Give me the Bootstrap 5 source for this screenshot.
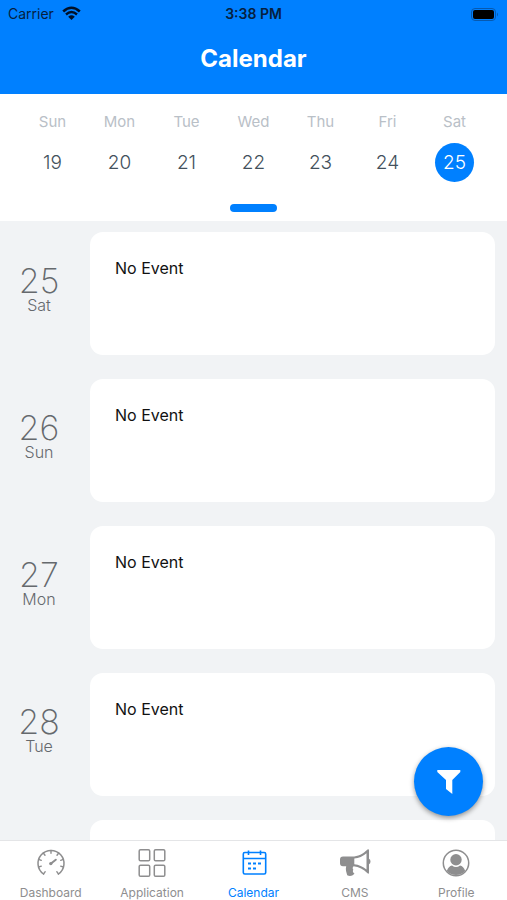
<!DOCTYPE html>
<html lang="en">
<head>
<meta charset="utf-8">
<meta name="viewport" content="width=device-width, initial-scale=1">
<title>Calendar</title>
<link href="https://cdn.jsdelivr.net/npm/bootstrap@5.3.0/dist/css/bootstrap.min.css" rel="stylesheet">
<style>
  :root { --brand: #0080ff; --muted: #8e8e8f; }
  body { font-family: Inter, "Liberation Sans", sans-serif; background: #f1f3f5; color: #111; }
  .app-header { background: var(--brand); height: 94px; }
  .status-bar { height: 27px; padding: 0 8px; font-size: 14px; color: #06203f; }
  .status-time { font-weight: 600; }
  .app-title { font-size: 24px; line-height: 28px; font-weight: 700; margin-top: 18px; }
  .week-panel { padding: 17px 19px 9px; height: 127px; }
  .weekday { font-size: 15px; line-height: 22px; color: #b9c0c7; }
  .day-btn { width: 39px; height: 39px; margin-top: 10px; font-size: 19px; line-height: 39px; color: #43515c; font-weight: 300; }
  .day-btn.active { background: var(--brand); color: #fff; }
  .knob { width: 47px; height: 8px; background: var(--brand); }
  .agenda { padding: 11px 12px 0 0; }
  .agenda-row { margin-bottom: 24px; }
  .agenda-date { width: 78px; margin-right: 12px; padding-top: 35px; color: #65696d; font-weight: 300; }
  .agenda-num { font-size: 34px; line-height: 28px; font-weight: 200; }
  .agenda-day { font-size: 16px; line-height: 20px; }
  .event-card { height: 123px; border-radius: 13px; padding: 24px 25px; font-size: 16px; line-height: 24px; }
  .fab { width: 69px; height: 69px; right: 24px; bottom: 24px; background: var(--brand); box-shadow: 0 2px 5px rgba(0,0,0,.4); }
  .tab-bar { height: 60px; border-top: 1px solid #e4e5e7; }
  .tab-link { color: var(--muted); font-size: 12px; line-height: 16px; padding-top: 6px; gap: 6px; }
  .tab-link.active { color: var(--brand); }
</style>
<script src="https://cdn.jsdelivr.net/npm/bootstrap@5.3.0/dist/js/bootstrap.bundle.min.js" defer></script>
</head>
<body class="vh-100 d-flex flex-column overflow-hidden">
<header class="app-header flex-shrink-0">
  <div class="status-bar row g-0 align-items-center">
    <div class="col d-flex align-items-center gap-2"><span>Carrier</span>
      <svg width="19" height="15" viewBox="0 0 19 15" fill="none" stroke="#001027" aria-hidden="true"><path d="M1.2 5.5Q9.500-2 17.800 5.500" stroke-width="2.600"/><path d="M4 8.500Q9.500 3.500 15 8.500" stroke-width="2.400"/><path d="M6.200 10.700Q9.500 7.900 12.800 10.700L9.500 14Z" fill="#001027" stroke="none"/></svg>
    </div>
    <div class="col-auto status-time">3:38 PM</div>
    <div class="col text-end lh-1">
      <svg width="29" height="13" viewBox="0 0 29 13" aria-hidden="true"><rect x="1.500" y=".5" width="24" height="12" rx="3.500" fill="none" stroke="#0759af"/><rect x="3" y="2" width="21" height="9" rx="2" fill="#000"/><path d="M27 4.500q2 2 0 4z" fill="#0759af"/></svg>
    </div>
  </div>
  <h1 class="app-title text-white text-center mb-0">Calendar</h1>
</header>

<section class="week-panel bg-white flex-shrink-0 d-flex flex-column justify-content-between align-items-center" aria-label="Week">
  <div class="row g-0 w-100 text-center">
    <div class="col"><div class="weekday">Sun</div><button type="button" class="day-btn btn rounded-circle border-0 p-0">19</button></div>
    <div class="col"><div class="weekday">Mon</div><button type="button" class="day-btn btn rounded-circle border-0 p-0">20</button></div>
    <div class="col"><div class="weekday">Tue</div><button type="button" class="day-btn btn rounded-circle border-0 p-0">21</button></div>
    <div class="col"><div class="weekday">Wed</div><button type="button" class="day-btn btn rounded-circle border-0 p-0">22</button></div>
    <div class="col"><div class="weekday">Thu</div><button type="button" class="day-btn btn rounded-circle border-0 p-0">23</button></div>
    <div class="col"><div class="weekday">Fri</div><button type="button" class="day-btn btn rounded-circle border-0 p-0">24</button></div>
    <div class="col"><div class="weekday">Sat</div><button type="button" class="day-btn btn rounded-circle border-0 p-0 active">25</button></div>
  </div>
  <button type="button" class="knob btn border-0 p-0 rounded-pill" aria-label="Expand calendar"></button>
</section>

<div class="position-relative flex-grow-1 overflow-hidden d-flex flex-column">
  <main class="agenda flex-grow-1 overflow-hidden">
    <article class="agenda-row d-flex"><div class="agenda-date text-center"><div class="agenda-num">25</div><div class="agenda-day">Sat</div></div><div class="event-card bg-white flex-grow-1">No Event</div></article>
    <article class="agenda-row d-flex"><div class="agenda-date text-center"><div class="agenda-num">26</div><div class="agenda-day">Sun</div></div><div class="event-card bg-white flex-grow-1">No Event</div></article>
    <article class="agenda-row d-flex"><div class="agenda-date text-center"><div class="agenda-num">27</div><div class="agenda-day">Mon</div></div><div class="event-card bg-white flex-grow-1">No Event</div></article>
    <article class="agenda-row d-flex"><div class="agenda-date text-center"><div class="agenda-num">28</div><div class="agenda-day">Tue</div></div><div class="event-card bg-white flex-grow-1">No Event</div></article>
    <article class="agenda-row d-flex"><div class="agenda-date"></div><div class="event-card bg-white flex-grow-1"></div></article>
  </main>
  <button type="button" class="fab btn border-0 rounded-circle p-0 position-absolute d-flex align-items-center justify-content-center" aria-label="Filter">
    <svg width="24" height="24" viewBox="0 0 24 24" fill="#fff" aria-hidden="true"><path d="M.3 0H23.300V2L15.300 10V24L9 19V10L.3 2Z"/></svg>
  </button>
</div>

<nav class="tab-bar bg-white flex-shrink-0 row g-0" aria-label="Main">
  <a href="#" class="col tab-link text-decoration-none d-flex flex-column align-items-center">
    <svg width="30" height="32" viewBox="0 0 30 32" fill="none" stroke="currentColor" stroke-linecap="round" aria-hidden="true"><path d="M7.500 27A13 13 0 1 1 22.500 27" stroke-width="1.500"/><path d="M7.500 27l1.700-2.300M22.500 27l-1.700-2.300M2.600 20l2.700-.8M27.400 20l-2.700-.8M2.600 12.300l2.700 1M27.400 12.300l-2.700 1M7.300 6l1.700 2.200M22.700 6l-1.700 2.200M15 3.500v2.800" stroke-width="1.400"/><path d="M15 16.500l4.800-3.800" stroke-width="2"/><circle cx="14.800" cy="16.600" r="1.700" fill="currentColor" stroke="none"/></svg>
    <span>Dashboard</span></a>
  <a href="#" class="col tab-link text-decoration-none d-flex flex-column align-items-center">
    <svg width="30" height="32" viewBox="0 0 30 32" fill="none" stroke="currentColor" stroke-width="1.500" aria-hidden="true"><rect x="2.200" y="2.800" width="10.500" height="11" rx="1.300"/><rect x="17.300" y="2.800" width="10.500" height="11" rx="1.300"/><rect x="2.200" y="18.200" width="10.500" height="11" rx="1.300"/><rect x="17.300" y="18.200" width="10.500" height="11" rx="1.300"/></svg>
    <span>Application</span></a>
  <a href="#" class="col tab-link active text-decoration-none d-flex flex-column align-items-center" aria-current="page">
    <svg width="30" height="32" viewBox="0 0 30 32" fill="none" stroke="currentColor" stroke-width="1.600" aria-hidden="true"><rect x="4.300" y="5.500" width="22.400" height="21.500" rx="1.500"/><path d="M4.300 11.500H26.700M9.500 3.500v4.500M21.500 3.500v4.500" /><path d="M9 16.500h3M14 16.500h3M19 16.500h3M9 21.500h3M14 21.500h3" stroke-width="1.900"/></svg>
    <span>Calendar</span></a>
  <a href="#" class="col tab-link text-decoration-none d-flex flex-column align-items-center">
    <svg width="32" height="32" viewBox="0 0 32 32" fill="currentColor" aria-hidden="true"><path fill-rule="evenodd" d="M4 9.500H13C19 9.500 24 7 28.500 2.500Q30 1.800 30 3.500V11.800Q31.500 12.500 31.500 14.500T30 17.300V25.500Q30 27.500 28.500 26.300C24.500 22.300 20 19.800 14.500 19.300Q12.700 21 14.300 22.800Q13 24.700 15.500 26.700Q12 30.300 8.200 28.200C7.500 25 6.200 23 7.200 19.200H4Q1 19.200 1 16.200V12.500Q1 9.500 4 9.500ZM27.500 6.300Q22 11 15.300 11.600V17.200Q22 17.900 27.500 22.500Z"/></svg>
    <span>CMS</span></a>
  <a href="#" class="col tab-link text-decoration-none d-flex flex-column align-items-center">
    <svg width="30" height="32" viewBox="0 0 30 32" aria-hidden="true"><circle cx="15" cy="16" r="12.700" fill="none" stroke="currentColor" stroke-width="1.500"/><circle cx="15" cy="12.800" r="5.700" fill="currentColor"/><path d="M5.800 24Q7.500 19.200 11 18.500Q15 21.500 19 18.500Q22.500 19.200 24.200 24A12.500 12.500 0 0 1 5.800 24Z" fill="currentColor"/></svg>
    <span>Profile</span></a>
</nav>
</body>
</html>
